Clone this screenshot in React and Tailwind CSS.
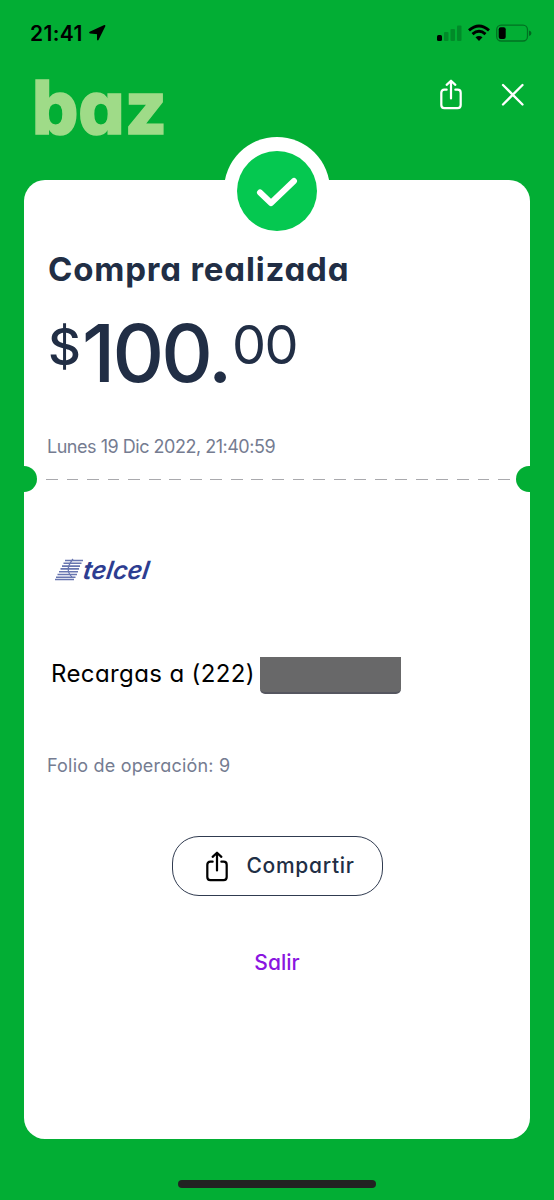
import React from "react";

function ShareIcon({ className }) {
  return (
    <svg viewBox="0 0 24 32" className={className} fill="none" stroke="currentColor" strokeWidth="2.3" strokeLinecap="round" strokeLinejoin="round">
      <path d="M7.500 11H5.200Q2 11 2 14.200V26.800Q2 30 5.200 30H18.800Q22 30 22 26.800V14.200Q22 11 18.800 11H16.500" />
      <path d="M12 20V2M7.500 6L12 1.800L16.500 6" />
    </svg>
  );
}

function StatusBar() {
  return (
    <div className="flex h-[66px] items-center pr-[22px] pl-[30px] text-black">
      <span className="w-[58px] text-[21px] leading-none font-semibold tracking-[0.4px] whitespace-nowrap">21:41</span>
      <svg viewBox="0 0 18 18" className="h-[18px] w-[18px]" fill="currentColor" stroke="currentColor" strokeWidth="1.600" strokeLinejoin="round">
        <path d="M16.600 1.800L9.800 15.600V9.400L2 8.600Z" />
      </svg>
      <svg viewBox="0 0 96 20" className="ml-auto h-5 w-24" fill="none">
        <rect x="1" y="12" width="5" height="6" rx="1.5" fill="#000" />
        <g fill="#000" opacity="0.2">
          <rect x="8" y="9" width="4.5" height="9" rx="1" />
          <rect x="14.5" y="6" width="4.5" height="12" rx="1" />
          <rect x="21" y="2.500" width="4.5" height="15.5" rx="1" />
        </g>
        <g stroke="#000" strokeWidth="2.9">
          <path d="M33 7.300Q43 -1.500 53 7.300" />
          <path d="M36.500 11.200Q43 5.500 49.500 11.200" />
        </g>
        <path d="M39.500 14.300Q43 11.500 46.500 14.300L43 18Z" fill="#000" />
        <rect x="60.700" y="2.200" width="30.800" height="15.800" rx="4.500" stroke="#000" strokeOpacity="0.35" strokeWidth="1.300" />
        <rect x="62.700" y="4.200" width="7" height="11.800" rx="2" fill="#000" />
        <path d="M93 7.500Q95.500 8 95.500 10Q95.500 12.500 93 13Z" fill="#000" opacity="0.4" />
      </svg>
    </div>
  );
}

function Header() {
  return (
    <header className="flex h-[114px] items-start pr-[29px] pl-[30px] text-white">
      <svg viewBox="0 0 140 96" className="h-24 w-[140px] overflow-visible" role="img" aria-label="baz">
        <text x="2" y="67.5" textLength="135" lengthAdjust="spacingAndGlyphs" fontSize="74" fontWeight="800" fill="#9fdb88" stroke="#9fdb88" strokeWidth="1.500" className="font-['Inter',sans-serif] [font-feature-settings:'cv11']">baz</text>
      </svg>
      <ShareIcon className="mt-[13px] ml-auto h-[31px] w-6" />
      <svg viewBox="0 0 24 24" className="mt-[17px] ml-[38px] h-6 w-6" stroke="currentColor" strokeWidth="2.3" strokeLinecap="round">
        <path d="M2 2L21.500 21.500M21.500 2L2 21.500" />
      </svg>
    </header>
  );
}

function SuccessBadge() {
  return (
    <div className="absolute -top-[43px] left-[200px] flex h-[107px] w-[106px] items-center justify-center rounded-full bg-white">
      <div className="flex h-20 w-20 items-center justify-center rounded-full bg-[#05c850]">
        <svg viewBox="0 0 42 30" className="mt-0.5 h-[30px] w-[42px]" fill="none" stroke="#fff" strokeWidth="6" strokeLinecap="round" strokeLinejoin="round">
          <path d="M4 15.500L15 26L38 4" />
        </svg>
      </div>
    </div>
  );
}

function TicketDivider() {
  return (
    <div className="flex h-[26px] items-center justify-between">
      <div className="h-[26px] w-[13px] rounded-r-full bg-[#02ae34]" />
      <div className="mr-[6px] ml-[9px] h-px flex-1 bg-[repeating-linear-gradient(90deg,#a9a9ad_0,#a9a9ad_11.8px,transparent_11.8px,transparent_20.55px)]" />
      <div className="h-[26px] w-[14px] rounded-l-full bg-[#02ae34]" />
    </div>
  );
}

function TelcelLogo() {
  return (
    <svg viewBox="0 0 104 26" className="mt-[65px] ml-[30px] h-[26px] w-[104px] overflow-visible" role="img" aria-label="telcel">
      <g stroke="#6876b0" strokeWidth="1.600">
        <path d="M11 3.500H29M9.500 6.300H27.500M8 9.100H26M6.500 11.900H25M5 14.700H24M3.500 17.500H23M2 20.300H21.500M1 22.500H20" />
        <path d="M19 2Q10 13 18 20" fill="none" strokeWidth="1.200" />
      </g>
      <text x="27" y="22" textLength="66" lengthAdjust="spacingAndGlyphs" fontSize="25" fontWeight="600" fontStyle="italic" fill="#2d3d91" transform="translate(4.400 0) skewX(-9)" className="font-['Inter',sans-serif]">telcel</text>
    </svg>
  );
}

function Receipt() {
  return (
    <main className="relative mx-6 h-[959px] w-[506px] rounded-[21px] bg-white text-[#212e45]">
      <SuccessBadge />
      <div className="px-6 pt-[69px]">
        <h1 className="h-10 text-[33px] leading-10 font-bold tracking-[0.8px] whitespace-nowrap">Compra realizada</h1>
        <div className="mt-[14px] flex h-[100px] items-start font-medium">
          <span className="mt-[14px] w-[34px] text-[51px] leading-[60px]">$</span>
          <span className="w-[150px] text-[80px] leading-[100px] tracking-[-2.8px]">100.</span>
          <span className="mt-[12px] text-[54px] leading-[60px] font-normal tracking-[-1.5px]">00</span>
        </div>
        <p className="mt-[34px] -ml-px h-[20px] text-[18px] leading-5 tracking-[-0.48px] whitespace-nowrap text-[#757c91]">Lunes 19 Dic 2022, 21:40:59</p>
      </div>
      <div className="mt-[9px]">
        <TicketDivider />
      </div>
      <TelcelLogo />
      <div className="mt-[74px] ml-[27px] flex h-[37px] items-center">
        <p className="-mt-[3px] w-[209px] text-[24px] leading-8 tracking-[0.38px] whitespace-nowrap text-black">Recargas a (222)</p>
        <div className="h-[37px] w-[141px] rounded-b-[5px] border-b-2 border-[#55565f] bg-[#686869]" />
      </div>
      <p className="mt-[62px] ml-[23px] h-5 text-[18px] leading-5 tracking-[0.2px] whitespace-nowrap text-[#757c91]">Folio de operación: 9</p>
      <div className="mt-[60px] flex flex-col items-center">
        <button className="flex h-[60px] w-[211px] items-center rounded-[27px] border-[1.5px] border-[#303b50] pl-[32px]">
          <ShareIcon className="h-[31px] w-6 text-black" />
          <span className="ml-[18px] text-[21px] leading-7 font-medium tracking-[0.7px]">Compartir</span>
        </button>
        <button className="mt-[52px] h-[30px] text-[21px] leading-[30px] font-medium text-[#8a16e0]">Salir</button>
      </div>
    </main>
  );
}

export default function App() {
  return (
    <div className="flex h-[1200px] w-[554px] flex-col overflow-hidden bg-[#02ae34] font-['Inter',sans-serif] [font-feature-settings:'cv11']">
      <StatusBar />
      <Header />
      <Receipt />
      <div className="mx-auto mt-[41px] h-2 w-[198px] rounded-full bg-[#222]" />
    </div>
  );
}
